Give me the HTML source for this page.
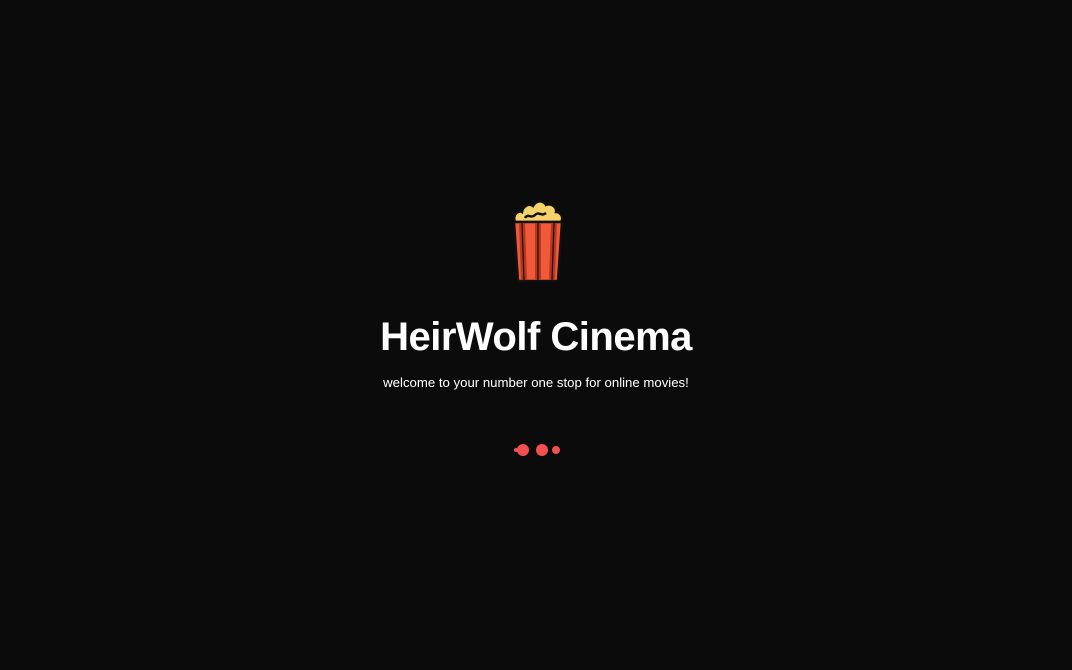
<!DOCTYPE html>
<html><head><style>
html,body{margin:0;width:1072px;height:670px;background:#0b0b0b;overflow:hidden;font-family:"Liberation Sans",sans-serif;color:#fff}
.wrap{position:absolute;left:0;width:1072px;text-align:center}
h1{margin:0;font-size:40px;font-weight:bold;letter-spacing:-0.5px}
p{margin:0;font-size:13.2px}
</style></head><body>
<svg style="position:absolute;left:510px;top:198px" width="56" height="86" viewBox="0 0 56 86">
<path d="M5 24 C2 16 9 12 12 14 C13 8 19 5 23 8 C27 1 34 3 36 7 C41 5 47 9 46 14 C51 14 54 20 51 24 Z" fill="#f6d26a" stroke="#111" stroke-width="2.5"/>
<path d="M15 20 C18 15 21 21 25 17 C29 13 31 19 36 15" fill="none" stroke="#111" stroke-width="2.5"/>
<path d="M4 24 L52 24 L48 83 L8 83 Z" fill="#f05a3a" stroke="#111" stroke-width="2.5" stroke-linejoin="round"/>
<path d="M12 25 L14 82 M28 25 L28 82 M44 25 L42 82" stroke="#b8361f" stroke-width="6"/>
<path d="M12 25 L14 82 M28 25 L28 82 M44 25 L42 82" stroke="#111" stroke-width="1.2"/>
</svg>
<div class="wrap" style="top:315px"><h1>HeirWolf Cinema</h1></div>
<div class="wrap" style="top:375px"><p>welcome to your number one stop for online movies!</p></div>
<svg style="position:absolute;left:510px;top:440px" width="54" height="20">
<circle cx="6" cy="10" r="2" fill="#f25050"/>
<circle cx="13" cy="10" r="6" fill="#f25050"/>
<circle cx="32" cy="10" r="6" fill="#f25050"/>
<circle cx="46" cy="10" r="4" fill="#f25050"/>
</svg>
</body></html>
